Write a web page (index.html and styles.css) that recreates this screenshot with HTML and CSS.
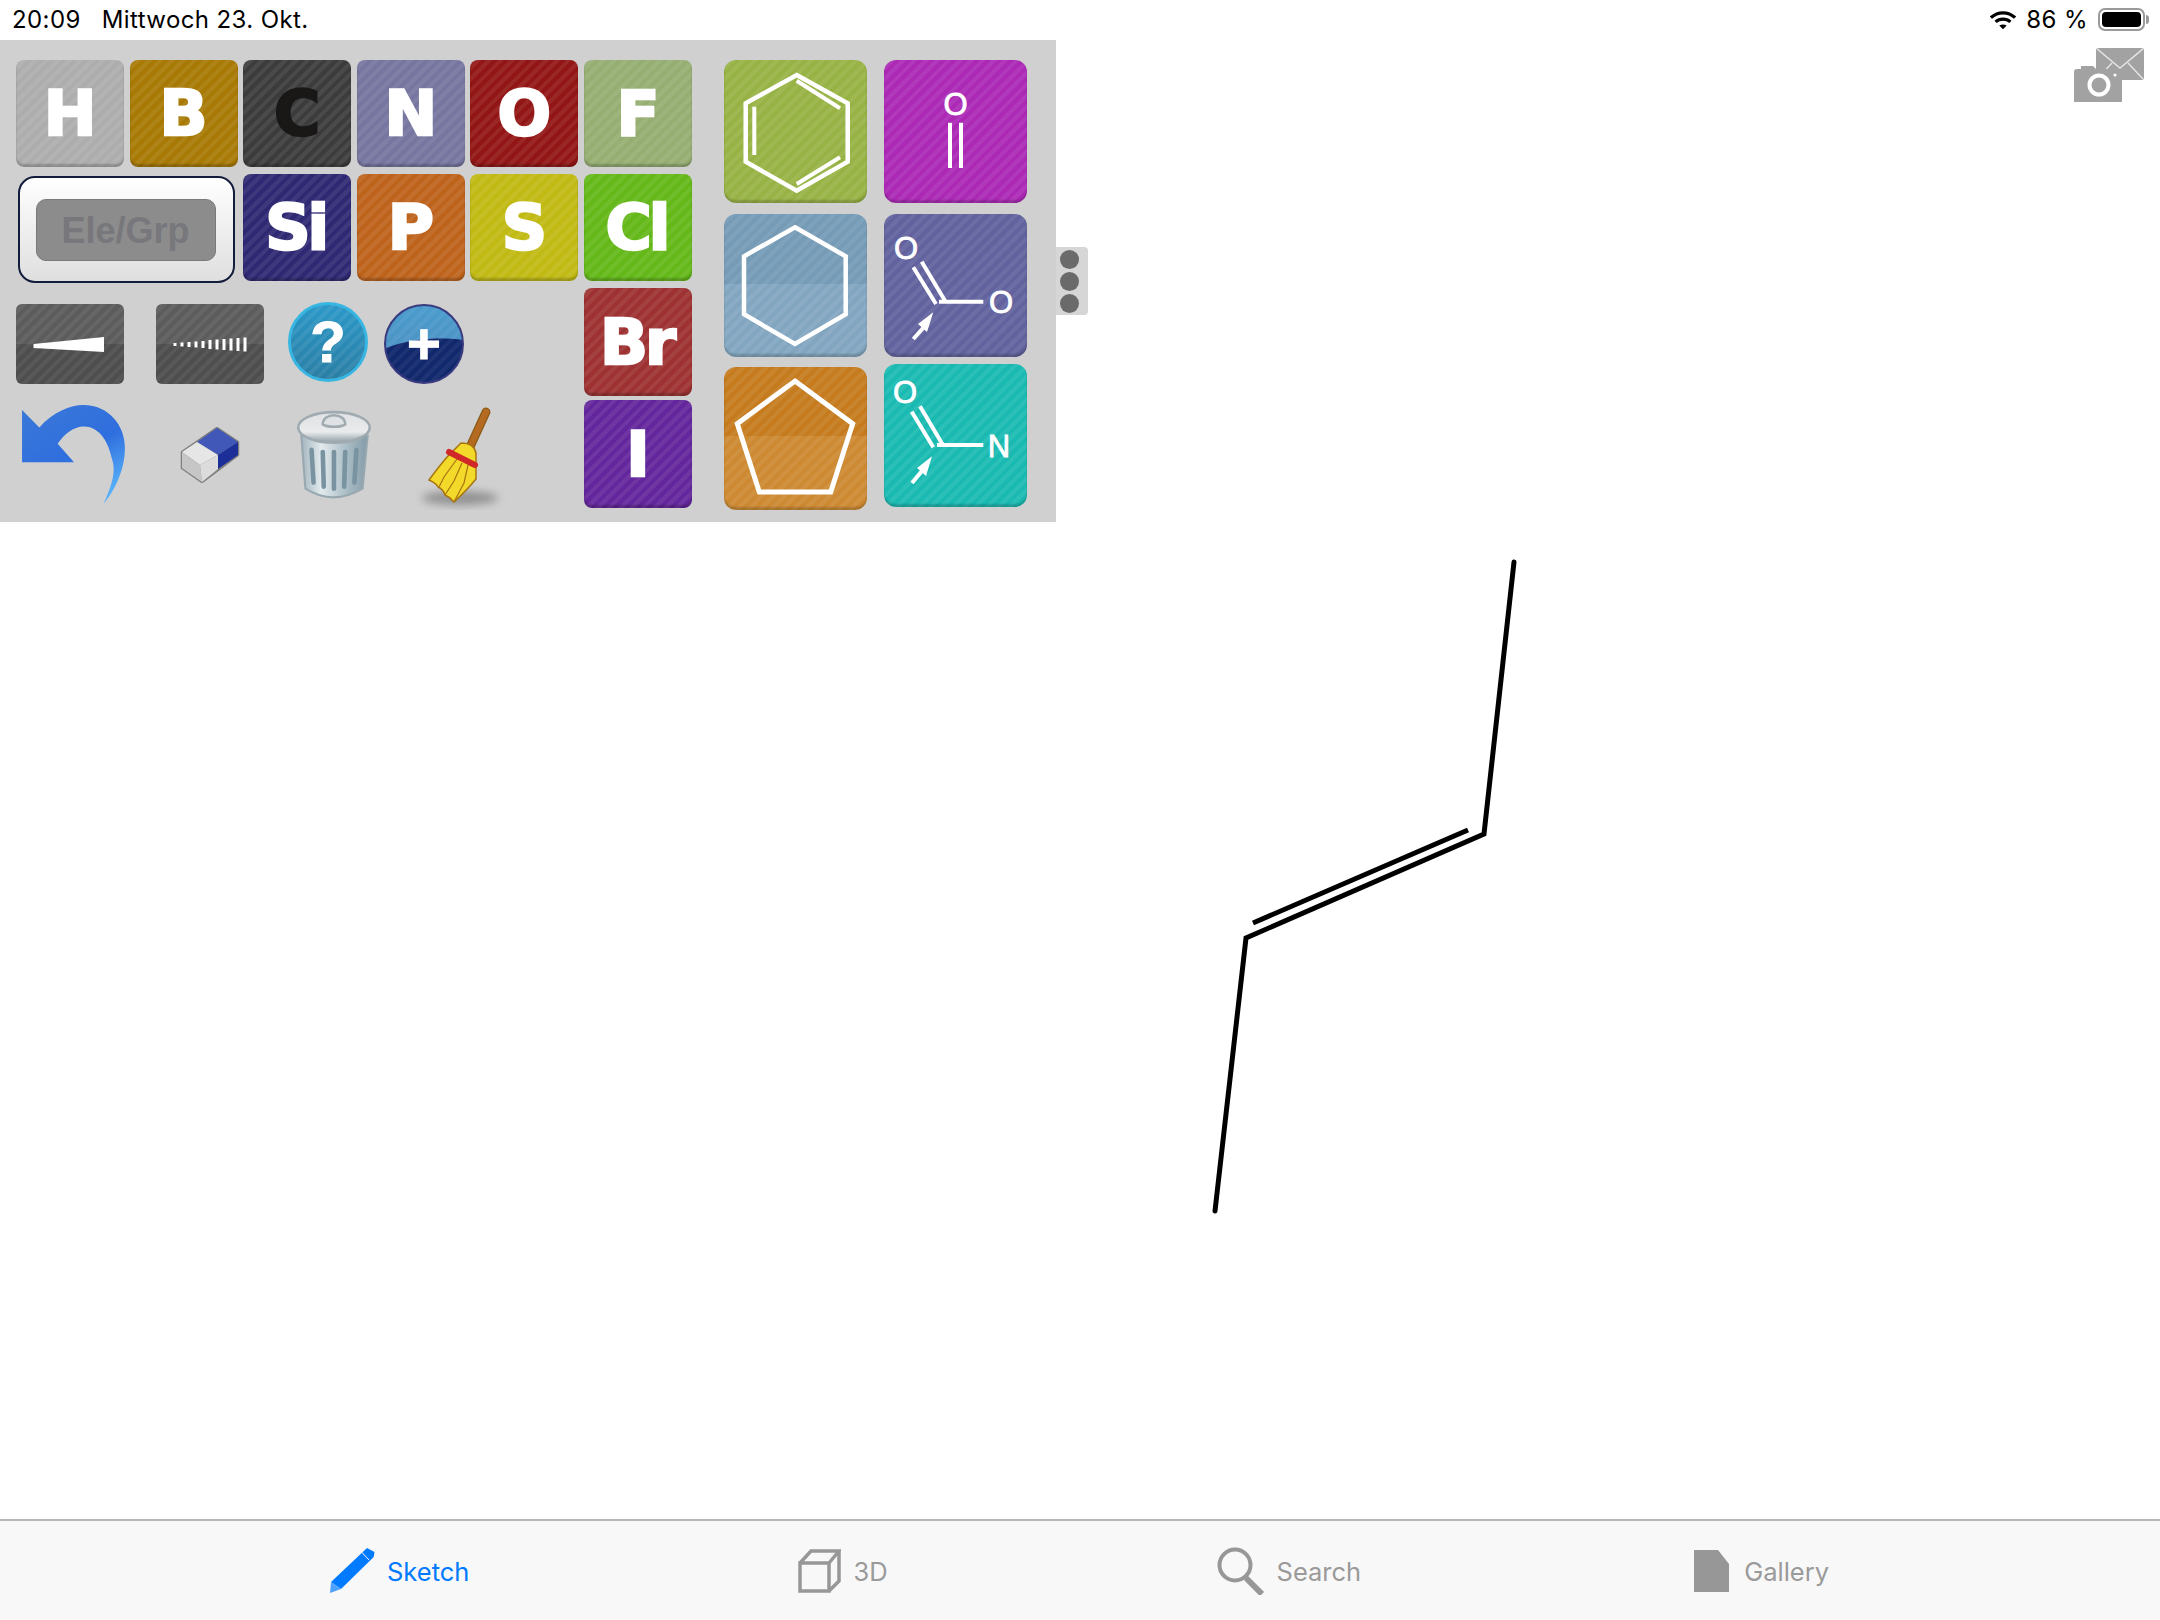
FILE: index.html
```html
<!DOCTYPE html>
<html lang="de">
<head>
<meta charset="utf-8">
<title>Sketch</title>
<link rel="stylesheet" href="styles.css">
</head>
<body>
<div class="app">
  <header class="status">
    <div class="status-left"><span>20:09</span><span>Mittwoch 23. Okt.</span></div>
    <div class="status-right">
      <svg class="wifi" viewBox="0 0 28 20"><path d="M1 7.5C8.5 .5 19.500 .5 27 7.500" class="wifi-arc"/><path d="M6 12C10.500 8 17.500 8 22 12" class="wifi-arc"/><path d="M10 16L14 20L18 16C15.500 14.500 12.500 14.500 10 16Z" class="wifi-dot"/></svg>
      <span>86 %</span>
      <div class="battery"><div class="battery-fill"></div></div>
    </div>
  </header>

  <main class="main">
    <svg class="molecule" viewBox="0 0 2160 1480">
      <path class="chain" d="M1514 522L1484 794L1246 898L1215 1171"/>
      <path d="M1253 883L1468 790"/>
    </svg>

    <svg class="share" viewBox="0 0 70 54">
      <path class="share-fill" d="M22 0H70V32H22Z"/>
      <path class="share-line" d="M22 0L46 20L70 0M22 32L38 15M70 32L54 15"/>
      <path class="share-fill share-cam" d="M3 21H7V18H19L22 21H48V54H0V24Q0 21 3 21Z"/>
      <circle class="share-lens" cx="25" cy="37" r="9.500"/>
      <circle class="share-dot" cx="41" cy="27" r="1.500"/>
    </svg>

    <section class="palette">
      <div class="elements">
        <div class="tile c-h"><span>H</span></div>
        <div class="tile c-b"><span>B</span></div>
        <div class="tile c-c"><span class="dark">C</span></div>
        <div class="tile c-n"><span>N</span></div>
        <div class="tile c-o"><span>O</span></div>
        <div class="tile c-f"><span>F</span></div>

        <div class="elegrp"><div class="elegrp-inner">Ele/Grp</div></div>
        <div class="tile c-si"><span>Si</span></div>
        <div class="tile c-p"><span>P</span></div>
        <div class="tile c-s"><span>S</span></div>
        <div class="tile c-cl"><span>Cl</span></div>

        <div class="tools-a">
          <div class="bond">
            <svg viewBox="0 0 108 80"><path class="white" d="M17.500 40L88 33V48L17.500 44Z"/></svg>
          </div>
          <div class="bond">
            <svg viewBox="0 0 108 80"><path class="hash" d="M19 39v3M26 38.500v4M33 38v5M40 37.500v6M47 37v7M54 36v9M61 35.500v10M68 35v11M75 34.500v12M82 34v13M89 33.500v14"/></svg>
          </div>
          <div class="ball ball-q">?</div>
          <div class="ball ball-plus">+</div>
        </div>
        <div class="tile c-br"><span>Br</span></div>

        <div class="tools-b">
          <svg class="undo" viewBox="0 0 106 100" preserveAspectRatio="none">
            <defs>
              <linearGradient id="undoG" x1="0" y1="0" x2="0.6" y2="1">
                <stop offset="0" stop-color="#3b78d8"/><stop offset=".6" stop-color="#2f6ede"/><stop offset="1" stop-color="#56adf8"/>
              </linearGradient>
            </defs>
            <path fill="url(#undoG)" d="M2 6L19 23C32 8 50 1 62 1C88 1 103 22 103 43C103 66 92 86 82 98C90 80 95 66 90 53C86 34 76 22 63 22C52 22 43 30 37 39L53 57H2Z"/>
          </svg>
          <svg class="eraser" viewBox="0 0 62 56">
            <path class="er-edge" d="M2 25L37 1L58 15V28L22 55L2 41Z"/>
            <path fill="#4258b8" d="M17 15L37 1L58 15L38 28Z"/>
            <path fill="#1c2e98" d="M38 28L58 15V28L38 42Z"/>
            <path fill="#e6e6e6" d="M2 25L17 15L38 28L20 38Z"/>
            <path fill="#c6c6c6" d="M2 25L20 38L22 55L2 41Z"/>
            <path fill="#dcdcdc" d="M20 38L38 28V42L22 55Z"/>
          </svg>
          <svg class="trash" viewBox="0 0 78 94">
            <defs>
              <linearGradient id="binG" x1="0" y1="0" x2="1" y2="0">
                <stop offset="0" stop-color="#a4b5be"/><stop offset=".3" stop-color="#e2eaed"/><stop offset=".7" stop-color="#a8bbc4"/><stop offset="1" stop-color="#849ca8"/>
              </linearGradient>
              <linearGradient id="lidG" x1="0" y1="0" x2="0" y2="1">
                <stop offset="0" stop-color="#dfe1e3"/><stop offset=".65" stop-color="#e9ebec"/><stop offset="1" stop-color="#8d9ca3"/>
              </linearGradient>
            </defs>
            <path fill="url(#binG)" stroke="#98a8b0" stroke-width="2" d="M6 28L10 80Q37 97 66 80L71 28Z"/>
            <path class="bin-slot" d="M16 42L18 74M27 44L28 78M38 44V80M49 44L48 78M60 42L58 74"/>
            <ellipse cx="38" cy="20" rx="35" ry="15" fill="url(#lidG)" stroke="#a0abb1" stroke-width="2.500"/>
            <path class="bin-knob" d="M27 17C27 5 49 5 49 17C45 20 31 20 27 17Z"/>
          </svg>
          <svg class="broom" viewBox="0 0 90 105">
            <defs><filter id="shadowB" x="-30%" y="-100%" width="160%" height="300%"><feGaussianBlur stdDeviation="4"/></filter></defs>
            <ellipse cx="44" cy="93" rx="38" ry="7" fill="#707070" opacity=".65" filter="url(#shadowB)"/>
            <path class="broom-stick-edge" d="M70 7L54 42"/>
            <path class="broom-stick" d="M70 7L54 42"/>
            <path fill="#f2d92a" stroke="#a8740f" stroke-width="1.500" d="M45 38Q58 38 60 48L60 74Q52 84 38 97Q34 92 29 90Q27 84 22 82Q20 78 13 75Q24 60 32 51Z"/>
            <path class="broom-lines" d="M41 54L28 72L23 82M46 58L38 76L29 90M52 60L48 78L38 97"/>
            <path class="broom-band" d="M33 47L59 60"/>
          </svg>
        </div>
        <div class="tile c-i"><span>I</span></div>
      </div>

      <div class="templates">
        <div class="temp c-benzene">
          <svg viewBox="0 0 143 143"><path class="mol" d="M72.700 15L123.700 43.300V101.700L72.700 130.700L21.700 101.700V43.300Z"/><path class="mol-thin" d="M72.700 20.700L116 48.300M72.700 124L116 97.300M30.300 46.700V95"/></svg>
        </div>
        <div class="temp c-carbonyl">
          <svg viewBox="0 0 143 143"><text class="atom" x="71.500" y="54.500">O</text><path class="mol-thin" d="M66 62.700V108M77 62.700V108"/></svg>
        </div>
        <div class="temp c-hex">
          <svg viewBox="0 0 143 143"><path class="mol" d="M71 13.300L121.700 42.300V100.300L71 130L20 100.300V42.300Z"/></svg>
        </div>
        <div class="temp c-ester">
          <svg viewBox="0 0 143 143"><text class="atom" x="22" y="45">O</text><text class="atom" x="117" y="99">O</text><path class="mol-thin" d="M29.300 53.300L52 90M37.700 47.700L61 86.700M55 87.700H99.300"/><path class="white" d="M49.300 98.300L43 118L34 110Z"/><path class="mol-thin" d="M40 113L29.300 125"/></svg>
        </div>
        <div class="temp c-penta">
          <svg viewBox="0 0 143 143"><path class="mol-heavy" d="M71 14L128.700 56.700L106.700 125H35.300L13.300 56.700Z"/></svg>
        </div>
        <div class="temp c-amide">
          <svg viewBox="0 0 143 143"><text class="atom" x="21" y="39">O</text><text class="atom" x="115" y="93">N</text><path class="mol-thin" d="M27.700 47.700L49.300 83.300M36 42.300L58.300 80M53 81H99.300"/><path class="white" d="M48 92.300L42 112L33 104Z"/><path class="mol-thin" d="M38 107L28 119"/></svg>
        </div>
      </div>

      <div class="handle"><i></i><i></i><i></i></div>
    </section>
  </main>

  <nav class="tabs">
    <div class="tab active">
      <svg class="ic-pencil" viewBox="0 0 45 45"><path fill="#007aff" d="M37 0L44.500 4L43.700 9L11 41L1 34Z"/><path fill="#4da2ff" d="M1 34L11 41L0 45Z"/><path class="pencil-cut" d="M31 3.500L39 12"/></svg>
      <span>Sketch</span>
    </div>
    <div class="tab">
      <svg class="ic-cube" viewBox="0 0 43 44"><path class="cube" d="M2 14H31V42H2ZM2 14L13 2H41L31 14M31 42L41 32V2"/></svg>
      <span>3D</span>
    </div>
    <div class="tab">
      <svg class="ic-search" viewBox="0 0 48 48"><circle class="glass" cx="18" cy="18" r="15.500"/><path class="glass-h" d="M29 31L45 47"/></svg>
      <span>Search</span>
    </div>
    <div class="tab tab-g">
      <svg class="ic-doc" viewBox="0 0 35 42"><path fill="#979797" d="M0 0H35V42H0Z"/><path fill="#f8f8f8" d="M24 0H35V14Z"/></svg>
      <span>Gallery</span>
    </div>
  </nav>
</div>
</body>
</html>
```

FILE: styles.css
```css
* { box-sizing: border-box; }
html, body { margin: 0; padding: 0; background: #fff; }

.app {
  width: 2160px;
  height: 1620px;
  display: flex;
  flex-direction: column;
  overflow: hidden;
  font-family: Inter, "Liberation Sans", sans-serif;
}

/* status bar */
.status {
  height: 40px;
  flex: none;
  display: flex;
  justify-content: space-between;
  align-items: center;
  padding: 0 15px 1px 12px;
  font-size: 24px;
  letter-spacing: .4px;
  color: #000;
}
.status-left { display: flex; gap: 21px; }
.status-right { display: flex; align-items: center; gap: 10px; }
.wifi { width: 26px; height: 20px; }
.wifi-arc { fill: none; stroke: #000; stroke-width: 3.500; }
.wifi-dot { fill: #000; }
.battery {
  position: relative;
  width: 47px;
  height: 23px;
  border: 2px solid #9a9a9a;
  border-radius: 7px;
  padding: 2px;
}
.battery::after {
  content: "";
  position: absolute;
  left: 46px;
  top: 5px;
  width: 3px;
  height: 9px;
  background: #9a9a9a;
  border-radius: 0 3px 3px 0;
}
.battery-fill { width: 100%; height: 100%; background: #000; border-radius: 4px; }

/* main */
.main { position: relative; flex: 1; min-height: 0; }
.molecule {
  position: absolute;
  left: 0;
  top: 0;
  width: 2160px;
  height: 1480px;
}
.molecule path { fill: none; stroke: #000; stroke-width: 5; stroke-linejoin: miter; }
.molecule .chain { stroke-linecap: round; }
.share { position: absolute; left: 2074px; top: 8px; width: 70px; height: 54px; }
.share-fill { fill: #a2a2a2; }
.share-cam { stroke: #fff; stroke-width: 0; }
.share-line { fill: none; stroke: #e4e4e4; stroke-width: 1.500; }
.share-lens { fill: #a2a2a2; stroke: #fff; stroke-width: 4; }
.share-dot { fill: #fff; }

/* palette */
.palette {
  position: relative;
  width: 1056px;
  height: 482px;
  background: #d0d0d0;
  padding: 20px 0 0 16px;
  display: flex;
  gap: 32px;
}
.elements {
  display: grid;
  grid-template-columns: repeat(6, 108px);
  grid-template-rows: 114px 114px 112px 108px;
  column-gap: 5.600px;
}

.tile {
  height: 107px;
  border-radius: 8px;
  display: flex;
  align-items: center;
  justify-content: center;
  background-image: repeating-linear-gradient(135deg, rgba(255,255,255,0) 0 4px, rgba(255,255,255,.07) 4px 8px);
  box-shadow: inset 0 -3px 2px rgba(0,0,0,.2);
}
.tile span {
  font-family: "DejaVu Sans", sans-serif;
  font-weight: 700;
  font-size: 63px;
  line-height: 1;
  color: #fff;
  letter-spacing: -3px;
  margin-left: -3px;
  -webkit-text-stroke: 2.500px currentColor;
}
.tile span.dark { color: #1a1717; }

.c-h { background-color: #adadad; }
.c-b { background-color: #a87a05; }
.c-c { background-color: #3c3c3c; }
.c-n { background-color: #7676a0; }
.c-o { background-color: #931616; }
.c-f { background-color: #96ae72; }
.c-si { background-color: #2f2973; }
.c-p { background-color: #be631c; }
.c-s { background-color: #c1ba14; }
.c-cl { background-color: #64b819; }
.c-br { background-color: #9e3232; height: 108px; }
.c-i { background-color: #64269c; height: 108px; }

.elegrp {
  grid-column: span 2;
  width: 217px;
  height: 107px;
  margin: 2px 0 0 2px;
  border: 2px solid #141c3c;
  border-radius: 17px;
  background: linear-gradient(#ffffff, #dfdfdf);
  display: flex;
  align-items: center;
  justify-content: center;
  padding-right: 2px;
}
.elegrp-inner {
  width: 180px;
  height: 62px;
  border-radius: 10px;
  border: 1px solid #7a7a7a;
  background: #8c8c8c;
  color: #77777c;
  font: 700 36px/62px "Liberation Sans", sans-serif;
  text-align: center;
}

.tools-a {
  grid-column: span 5;
  display: flex;
  align-items: flex-start;
  padding-top: 16px;
}
.bond {
  width: 108px;
  height: 80px;
  margin-right: 32px;
  border-radius: 6px;
  background:
    repeating-linear-gradient(135deg, rgba(255,255,255,0) 0 4px, rgba(255,255,255,.06) 4px 8px),
    linear-gradient(#5c5c5c 50%, #4e4e4e 50%);
}
.bond + .bond { margin-right: 24px; }
.bond svg { display: block; width: 108px; height: 80px; }
.white { fill: #fff; }
.hash { fill: none; stroke: #fff; stroke-width: 3; }
.ball {
  width: 80px;
  height: 80px;
  border-radius: 50%;
  display: flex;
  align-items: center;
  justify-content: center;
  color: #fff;
  font: 700 58px/1 "Liberation Sans", sans-serif;
  -webkit-text-stroke: 1px #fff;
}
.ball-q {
  margin-top: -2px;
  border: 3px solid #38b6e2;
  background:
    repeating-linear-gradient(135deg, rgba(255,255,255,0) 0 4px, rgba(255,255,255,.07) 4px 8px),
    linear-gradient(#2b98c8, #2a7ea4);
}
.ball-plus {
  margin-left: 16px;
  border: 2px solid #3a3a80;
  background-color: #12286c;
  background-image:
    repeating-linear-gradient(135deg, rgba(255,255,255,0) 0 4px, rgba(255,255,255,.05) 4px 8px),
    radial-gradient(ellipse 88px 44px at 72% 100%, #12286c 98%, rgba(18,40,108,0) 100%),
    linear-gradient(#4a9ccc, #4f8cc0);
}

.tools-b { grid-column: span 5; display: flex; align-items: flex-start; padding-left: 4px; gap: 52px; }
.tools-b svg { display: block; flex: none; }
.undo { width: 108px; height: 102px; margin-top: 4px; }
.eraser { width: 62px; height: 56px; margin-top: 27px; filter: blur(.6px); }
.er-edge { fill: #808080; stroke: #808080; stroke-width: 2.500; stroke-linejoin: round; }
.trash { width: 80px; height: 96px; margin-top: 7px; margin-left: 1px; filter: blur(.5px); }
.bin-slot { fill: none; stroke: #7a93a1; stroke-width: 4.500; stroke-linecap: round; }
.bin-knob { fill: #dfe2e4; stroke: #a0abb1; stroke-width: 2.500; }
.broom { width: 90px; height: 105px; margin: 5px 0 0 -11px; }
.broom-stick-edge { fill: none; stroke: #8a5a18; stroke-width: 9; stroke-linecap: round; }
.broom-stick { fill: none; stroke: #b46a20; stroke-width: 6.500; stroke-linecap: round; }
.broom-lines { fill: none; stroke: #a8740f; stroke-width: 1.200; }
.broom-band { fill: none; stroke: #d02828; stroke-width: 6; stroke-linecap: round; }

/* template tiles */
.templates {
  display: grid;
  grid-template-columns: 143px 143px;
  grid-template-rows: 154px 153px 143px;
  column-gap: 17px;
}
.temp {
  height: 143px;
  border-radius: 12px;
  background-image: repeating-linear-gradient(135deg, rgba(255,255,255,0) 0 4px, rgba(255,255,255,.07) 4px 8px);
  box-shadow: inset 0 -3px 2px rgba(0,0,0,.18);
}
.temp svg { display: block; width: 143px; height: 143px; }
.c-benzene { background-color: #98b345; }
.c-carbonyl { background-color: #ac29b6; }
.c-hex {
  background-image:
    repeating-linear-gradient(135deg, rgba(255,255,255,0) 0 4px, rgba(255,255,255,.07) 4px 8px),
    linear-gradient(#759bb7 49%, #82a6c0 49%);
}
.c-ester { background-color: #62629e; }
.c-penta {
  background-image:
    repeating-linear-gradient(135deg, rgba(255,255,255,0) 0 4px, rgba(255,255,255,.07) 4px 8px),
    linear-gradient(#c57b1e 48%, #cd8a32 48%);
}
.c-amide { background-color: #1abab2; margin-top: -3px; }
.mol { fill: none; stroke: #fff; stroke-width: 4.500; }
.mol-heavy { fill: none; stroke: #fff; stroke-width: 5; }
.mol-thin { fill: none; stroke: #fff; stroke-width: 4; }
.atom {
  font: 400 31px "Liberation Sans", sans-serif;
  fill: #fff;
  stroke: #fff;
  stroke-width: .8px;
  text-anchor: middle;
}

.handle {
  position: absolute;
  left: 100%;
  top: 207px;
  width: 32px;
  height: 68px;
  background: #d6d6d6;
  border-radius: 0 4px 4px 0;
  display: flex;
  flex-direction: column;
  justify-content: center;
  gap: 3px;
  padding-left: 4px;
}
.handle i { width: 19px; height: 19px; border-radius: 50%; background: #6a6a6a; }

/* tab bar */
.tabs {
  height: 101px;
  flex: none;
  border-top: 2px solid #b6b6b6;
  background: #f8f8f8;
  display: flex;
  align-items: center;
  gap: 329px;
  padding: 1px 0 0 330px;
  font-size: 25.500px;
  color: #9a9a9a;
}
.tab { display: flex; align-items: center; gap: 12px; }
.tab.active { color: #007aff; }
.tab-g { gap: 15px; margin-left: 4px; }
.tab svg { display: block; flex: none; margin-top: -1px; }
.ic-pencil { width: 45px; height: 45px; }
.pencil-cut { fill: none; stroke: #f8f8f8; stroke-width: 1; }
.ic-cube { width: 43px; height: 44px; }
.cube { fill: none; stroke: #979797; stroke-width: 3.500; }
.ic-search { width: 48px; height: 48px; }
.glass { fill: none; stroke: #979797; stroke-width: 4; }
.glass-h { fill: none; stroke: #979797; stroke-width: 6; }
.ic-doc { width: 35px; height: 42px; }
```
